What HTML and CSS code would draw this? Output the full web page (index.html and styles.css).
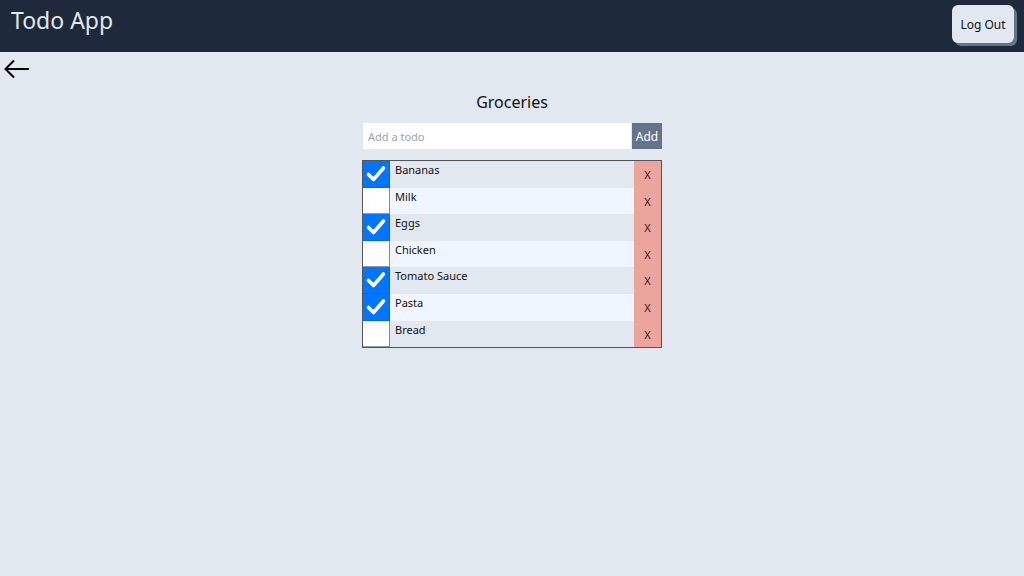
FILE: index.html
```html
<!DOCTYPE html>
<html>
<head>
<meta charset="utf-8">
<link rel="stylesheet" href="styles.css">
</head>
<body>
<header class="topbar">
  <h1 class="brand">Todo App</h1>
  <button class="logout">Log Out</button>
</header>
<main class="page">
  <div class="back-row">
    <svg class="back" width="28" height="20" viewBox="0 0 28 20"><path d="M26 10H3M11 1.5L2.5 10l8.5 8.5" fill="none" stroke="#000" stroke-width="2"/></svg>
  </div>
  <section class="panel">
    <h2 class="title">Groceries</h2>
    <form class="add-form">
      <input class="add-input" type="text" placeholder="Add a todo">
      <button class="add-btn" type="button">Add</button>
    </form>
    <ul class="list">
      <li class="item odd"><span class="box checked"><svg viewBox="0 0 26 26" width="26" height="26"><path d="M5.5 13.5l5 5L20.5 7" fill="none" stroke="#fff" stroke-width="3.6" stroke-linecap="round" stroke-linejoin="round"/></svg></span><span class="label">Bananas</span><span class="del">X</span></li>
      <li class="item even"><span class="box"></span><span class="label">Milk</span><span class="del">X</span></li>
      <li class="item odd"><span class="box checked"><svg viewBox="0 0 26 26" width="26" height="26"><path d="M5.5 13.5l5 5L20.5 7" fill="none" stroke="#fff" stroke-width="3.6" stroke-linecap="round" stroke-linejoin="round"/></svg></span><span class="label">Eggs</span><span class="del">X</span></li>
      <li class="item even"><span class="box"></span><span class="label">Chicken</span><span class="del">X</span></li>
      <li class="item odd"><span class="box checked"><svg viewBox="0 0 26 26" width="26" height="26"><path d="M5.5 13.5l5 5L20.5 7" fill="none" stroke="#fff" stroke-width="3.6" stroke-linecap="round" stroke-linejoin="round"/></svg></span><span class="label">Tomato Sauce</span><span class="del">X</span></li>
      <li class="item even"><span class="box checked"><svg viewBox="0 0 26 26" width="26" height="26"><path d="M5.5 13.5l5 5L20.5 7" fill="none" stroke="#fff" stroke-width="3.6" stroke-linecap="round" stroke-linejoin="round"/></svg></span><span class="label">Pasta</span><span class="del">X</span></li>
      <li class="item odd"><span class="box"></span><span class="label">Bread</span><span class="del">X</span></li>
    </ul>
  </section>
</main>
</body>
</html>
```
FILE: styles.css
```css
* { box-sizing: border-box; }
html, body { margin: 0; padding: 0; }
body {
  background: #e2e8f0;
  font-family: "Noto Sans", "Open Sans", sans-serif;
  color: #111;
  width: 1024px;
  height: 576px;
  overflow: hidden;
}
.topbar {
  height: 52px;
  background: #1e293b;
  display: flex;
  justify-content: space-between;
  align-items: flex-start;
  padding: 0 10px 0 11px;
}
.brand {
  margin: 4px 0 0;
  font-size: 23px;
  font-weight: 400;
  color: #e2e8f0;
  line-height: 32px;
}
.logout {
  margin-top: 5px;
  width: 62px;
  height: 38px;
  border: none;
  border-radius: 6px;
  background: #e2e8f0;
  box-shadow: 3px 3px 0 #64748b;
  font-family: inherit;
  font-size: 12px;
  color: #111;
  padding: 0;
}
.back-row { padding: 7px 0 0 3px; line-height: 0; }
.panel {
  width: 300px;
  margin: 12px auto 0;
}
.title {
  margin: 0;
  text-align: center;
  font-size: 16px;
  font-weight: 400;
  line-height: 22px;
}
.add-form {
  display: flex;
  margin: 10px 0 11px 1px;
  height: 26px;
}
.add-input {
  flex: 1;
  border: none;
  background: #fff;
  font-family: inherit;
  font-size: 11px;
  padding: 0 5px;
  outline: none;
}
.add-input::placeholder { color: #9ca3af; }
.add-btn {
  width: 30px;
  margin-left: 1px;
  border: none;
  background: #64748b;
  color: #fff;
  font-family: inherit;
  font-size: 12px;
  padding: 0;
}
.list {
  list-style: none;
  margin: 0;
  padding: 0;
  border: 1px solid #555;
}
.item {
  display: flex;
  height: 26.6px;
  font-size: 11px;
}
.odd .label { background: #e2e8f0; }
.even .label { background: #eff6ff; }
.box {
  width: 27px;
  background: #fff;
  border-right: 1px solid #888;
  border-bottom: 1px solid #999;
  display: flex;
  align-items: center;
  justify-content: center;
}
.box.checked { background: #0075ff; border-color: #0067e0; }
.label {
  flex: 1;
  padding: 0 0 0 5px;
  line-height: 15px;
  padding-top: 1px;
}
.del {
  width: 27px;
  background: #eca59c;
  text-align: center;
  padding-top: 6px;
  line-height: 15px;
  font-size: 11px;
  color: #222;
}
```
